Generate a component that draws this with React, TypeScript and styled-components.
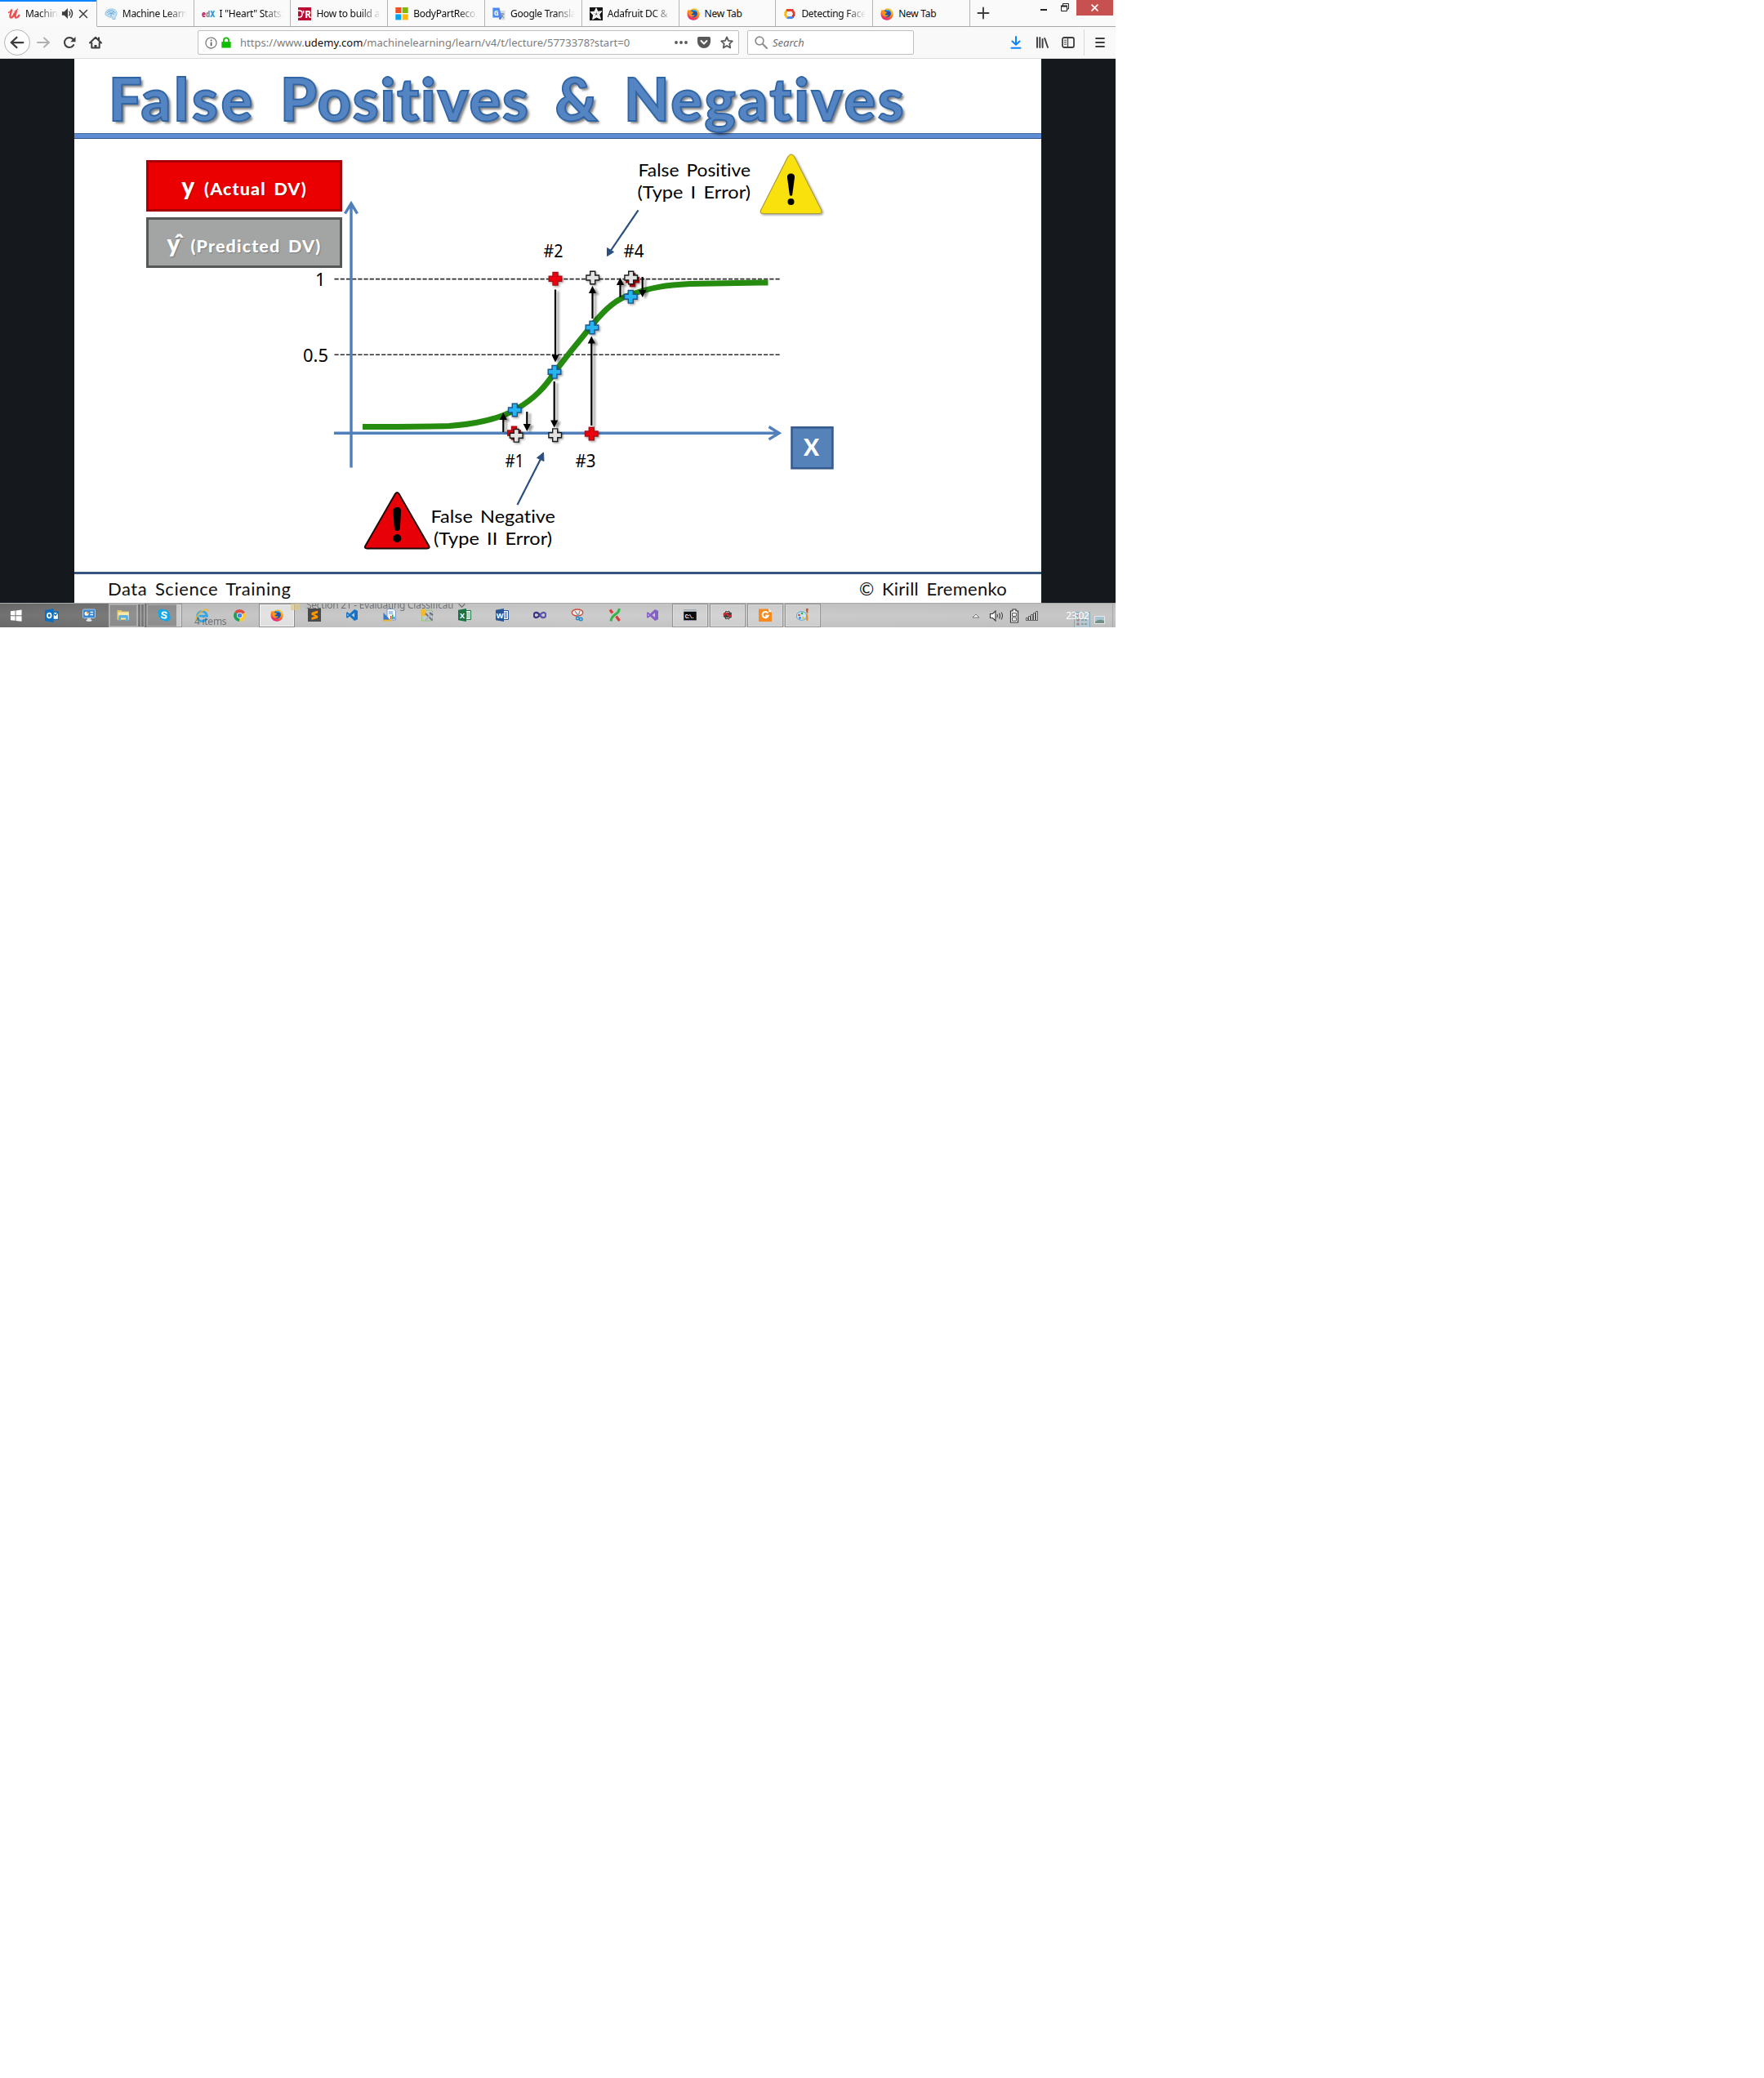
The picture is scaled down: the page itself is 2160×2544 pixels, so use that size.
import React from "react";
import styled, { createGlobalStyle, css } from "styled-components";

const uiFont = `"Noto Sans", "Open Sans", sans-serif`;
const slideFont = `Lato, "Open Sans", sans-serif`;

const Global = createGlobalStyle`
  html, body { margin: 0; padding: 0; background: #fff; }
  * { box-sizing: border-box; }
  svg { display: block; flex: none; }
`;

/* ---------- shell ---------- */
const Desktop = styled.div`
  display: flex;
  flex-direction: column;
  width: 1366px;
  height: 768px;
  overflow: hidden;
  background: #fff;
  font-family: ${uiFont};
`;

/* ---------- tab strip ---------- */
const TabStrip = styled.div`
  display: flex;
  flex: none;
  height: 33px;
  background: #fafafa;
`;
const Tab = styled.div<{ $active?: boolean }>`
  display: flex;
  align-items: center;
  flex: none;
  width: 118.8px;
  height: 33px;
  padding: 1px 8px 0 9px;
  border-right: 1px solid #b5b5b5;
  border-bottom: 1px solid #a8a8a8;
  background: #fafafa;
  ${(p) =>
    p.$active &&
    css`
      padding-right: 10px;
      border-bottom-color: #fafafa;
      box-shadow: inset 0 2px 0 #0a84ff;
    `}
`;
const TabLabel = styled.span<{ $fade?: boolean }>`
  flex: 1;
  min-width: 0;
  margin-left: 6px;
  white-space: nowrap;
  font-size: 12px;
  line-height: 18px;
  letter-spacing: -0.28px;
  color: #0c0c0d;
  ${(p) =>
    p.$fade &&
    css`
      mask-image: linear-gradient(to left, transparent 0, #000 24px);
    `}
`;
const TabAudio = styled.div`
  display: flex;
  align-items: center;
  gap: 6px;
  margin-left: 3px;
`;
const StripEnd = styled.div`
  display: flex;
  flex: 1;
  justify-content: space-between;
  border-bottom: 1px solid #a8a8a8;
`;
const NewTab = styled.div`
  display: flex;
  align-items: center;
  padding-left: 8px;
`;
const WindowButtons = styled.div`
  display: flex;
  align-items: flex-start;
  padding-right: 3px;
`;
const CloseButton = styled.div`
  display: flex;
  align-items: center;
  justify-content: center;
  width: 45px;
  height: 19px;
  margin-left: 5px;
  background: #c75050;
`;

/* ---------- navigation ---------- */
const NavBar = styled.div`
  display: flex;
  align-items: center;
  flex: none;
  height: 39px;
  padding: 0 11px 0 5px;
  border-bottom: 1px solid #dcdcdc;
  background: #f9f9fa;
`;
const BackButton = styled.div`
  display: flex;
  align-items: center;
  justify-content: center;
  width: 32px;
  height: 32px;
  border: 1px solid #b4b4b6;
  border-radius: 50%;
  background: #fdfdfd;
`;
const NavButtons = styled.div`
  display: flex;
  align-items: center;
  gap: 16px;
  width: 197px;
  margin-left: 8px;
`;
const Field = styled.div<{ $w: number }>`
  display: flex;
  align-items: center;
  width: ${(p) => p.$w}px;
  height: 30px;
  border: 1px solid #bfbfc0;
  border-radius: 2px;
  background: #fff;
`;
const UrlField = styled(Field)`
  padding: 0 6px 0 8px;
`;
const SearchField = styled(Field)`
  margin-left: 10px;
  padding-left: 8px;
  gap: 6px;
`;
const UrlText = styled.span`
  flex: 1;
  margin-left: 10px;
  white-space: nowrap;
  font-size: 13px;
  letter-spacing: 0.03px;
  color: #7c7c80;
  b {
    font-weight: 400;
    color: #0c0c0d;
  }
`;
const UrlActions = styled.div`
  display: flex;
  gap: 12px;
`;
const Placeholder = styled.span`
  font-size: 13px;
  font-style: italic;
  color: #6f6f73;
`;
const Tools = styled.div`
  display: flex;
  align-items: center;
  gap: 16px;
  margin-left: auto;
`;
const ToolDivider = styled.i`
  width: 1px;
  height: 32px;
  margin: 0 -5px;
  background: #d8d8da;
`;

/* ---------- video ---------- */
const Video = styled.main`
  display: flex;
  flex: none;
  height: 666px;
  padding: 0 91px;
  background: #15191e;
`;
const Slide = styled.article`
  display: flex;
  flex-direction: column;
  flex: 1;
  background: #fff;
  font-family: ${slideFont};
`;
const Title = styled.h1`
  position: relative;
  z-index: 1;
  display: flex;
  height: 91px;
  margin: 0;
  padding-left: 42px;
  font-size: 72px;
  font-weight: 900;
  line-height: 97px;
  font-variant-ligatures: none;
  color: #5584c3;
  -webkit-text-stroke: 1.8px #2f64a5;
  text-shadow: 3px 3px 3px rgba(0, 0, 0, 0.5);
`;
const Word = styled.span<{ $track: number; $gap: number }>`
  letter-spacing: ${(p) => p.$track}px;
  margin-right: ${(p) => p.$gap}px;
`;
const Rule = styled.div`
  flex: none;
  height: 7px;
  border: solid #2f5590;
  border-width: 1.5px 0;
  border-top-color: #3f679f;
  background: #5f8dd3;
`;
const PlotArea = styled.section`
  display: grid;
  flex: none;
  height: 530px;
  > * {
    grid-area: 1 / 1;
  }
`;
const Legend = styled.div`
  display: flex;
  flex-direction: column;
  gap: 7px;
  padding: 26px 0 0 88px;
`;
const LegendBox = styled.div<{ $fill: string; $line: string }>`
  display: flex;
  align-items: baseline;
  justify-content: center;
  width: 240px;
  height: 62.5px;
  padding-top: 11px;
  border: 3px solid ${(p) => p.$line};
  background: ${(p) => p.$fill};
  color: #fff;
  font-size: 21.5px;
  font-weight: 900;
  line-height: 34px;
  letter-spacing: 1.1px;
  word-spacing: 3.5px;
  text-shadow: 1px 1px 1px rgba(0, 0, 0, 0.25);
`;
const Symbol = styled.span<{ $gap: number }>`
  margin-right: ${(p) => p.$gap}px;
  font-size: 30px;
  letter-spacing: 0;
`;
const HattedY = styled(Symbol)`
  letter-spacing: -7px;
`;
const Footer = styled.footer`
  display: flex;
  justify-content: space-between;
  flex: none;
  height: 38px;
  padding: 0 42px 0 41px;
  border-top: 3px solid #35557f;
  font-size: 22px;
  line-height: 35px;
  letter-spacing: 0.55px;
  word-spacing: 3.5px;
  color: #111;
`;
const Credit = styled.span`
  letter-spacing: 0.25px;
`;

/* ---------- taskbar ---------- */
const Taskbar = styled.div`
  position: relative;
  display: flex;
  flex: none;
  height: 30px;
  overflow: hidden;
  border-top: 1px solid #a9aba9;
  background: linear-gradient(#0000000a, #ffffff0a 50%, #00000008),
    linear-gradient(90deg, #6c6c6c 0, #7b7b7b 216px, #c3c3c3 216px, #cbcbcb 700px, #c5c5c5);
`;
const Task = styled.div<{ $open?: boolean; $front?: boolean; $w?: number }>`
  display: flex;
  align-items: center;
  justify-content: center;
  flex: none;
  width: ${(p) => p.$w ?? 44}px;
  height: 29px;
  padding-bottom: 1px;
  margin-right: 2px;
  border: 1px solid transparent;
  ${(p) =>
    p.$open &&
    css`
      border-color: #929492;
      background: rgba(255, 255, 255, 0.16);
      box-shadow: inset 0 0 0 1px rgba(255, 255, 255, 0.25);
    `}
  ${(p) =>
    p.$front &&
    css`
      border-color: #8b8b8b;
      background: rgba(255, 255, 255, 0.5);
      box-shadow: inset 0 0 0 1px #f4f4f4;
    `}
`;
const StackEdge = styled.div`
  flex: none;
  width: 4px;
  height: 29px;
  border: 1px solid #b4b4b4;
  border-left: 0;
`;
const Stack = styled.div`
  display: flex;
  margin-right: 2px;
  ${Task} {
    margin: 0;
    border-color: #b4b4b4;
  }
`;
const Tray = styled.div`
  position: relative;
  z-index: 1;
  display: flex;
  align-items: center;
  margin-left: auto;
  padding-right: 33px;
`;
const Clock = styled.span`
  margin-left: 33px;
  font-size: 12px;
  letter-spacing: -0.6px;
  color: #fff;
`;
const Ghost = styled.div<{ $x: number; $y: number; $o?: number }>`
  position: absolute;
  left: ${(p) => p.$x}px;
  top: ${(p) => p.$y}px;
  display: flex;
  align-items: center;
  gap: 6px;
  font-size: 12px;
  line-height: 16px;
  letter-spacing: -0.26px;
  white-space: nowrap;
  color: #4c5258;
  opacity: ${(p) => p.$o ?? 0.7};
`;
const ShowDesktop = styled.i`
  position: absolute;
  right: 0;
  top: 0;
  width: 4px;
  height: 29px;
  border-left: 1px solid #a8a8a8;
`;

/* ---------- icons ---------- */
const Ico = ({ s = 16, children }: { s?: number; children: React.ReactNode }) => (
  <svg width={s} height={s} viewBox="0 0 16 16">
    {children}
  </svg>
);
const dark = "#3d3d40";
const line = (d: string, c = dark, w = 2) => (
  <path d={d} fill="none" stroke={c} strokeWidth={w} strokeLinecap="round" strokeLinejoin="round" />
);

const Firefox = () => (
  <Ico>
    <defs>
      <linearGradient id="fx" x1=".8" y1="0" x2=".3" y2="1">
        <stop offset="0" stopColor="#ffd83a" />
        <stop offset=".45" stopColor="#ff8a16" />
        <stop offset="1" stopColor="#e31587" />
      </linearGradient>
    </defs>
    <path d="M8.8 1.2C13 1 15.8 4.300 15.700 8.500 15.600 12.600 12.300 15.700 8.200 15.700 3.700 15.700.400 12.300.500 8 .500 5.800 1.100 3.800 2.200 2.300l.6 1.600C3.700 3 4.700 2.900 5.200 3 6 1.800 7.200 1.300 8.800 1.200z" fill="url(#fx)" />
    <circle cx="8.300" cy="7.600" r="4.600" fill="#1a55b5" />
    <path d="M8.300 2.900c2.500 0 4.200 1.600 4.500 3.600C11.800 4.900 10 4.600 8.700 4.600c-1.500 0-2.300-.4-2.400-1.100.6-.4 1.200-.6 2-.6z" fill="#32b8f0" />
    <path d="M2.300 5.200c1.500-1 3.100-.8 4.200.1l1.600.9-.8 1.200-1.700.6c.2 1.700 2.600 1.900 4.300 1.200-.9 2.200-3.600 2.900-5.700 1.600C2.500 9.600 1.900 7.100 2.300 5.200z" fill="#ff9514" />
  </Ico>
);
const Udemy = () => (
  <Ico>
    <path d="M5 3.500C4.300 7 2.800 10.600 3.700 12c1.300 1.700 4-1.300 5.100-4.500M11 4.500C10 7.400 8.900 11 10.100 12.300c1.300 1 3.200-.6 4.300-2.600" fill="none" stroke="#ea5252" strokeWidth="2.400" strokeLinecap="round" />
    <path d="M1 6.500c2-.5 3.200-1.600 4.200-3.400M8.500 5.200c2.200-.4 3.500-1.800 4.400-3.400" stroke="#ea5252" strokeWidth="1.300" fill="none" />
  </Ico>
);
const Brain = () => (
  <Ico>
    <path d="M1 9C.5 5 4 2 8.500 2c4 0 6.800 2.500 6.500 5.600-.2 2-1.200 3.400-2 4.400v2.500h-3L9.500 12C6 13 4 11 1 9z" fill="#c9e3f5" stroke="#86bde3" strokeWidth=".9" />
    <path d="M3 7c1-2 3-3 5-3s4 1 5 3M4 9c2-2 5-2 8-.5M6 5.500l2 2 3-2M8 8v3" fill="none" stroke="#5ba3d6" strokeWidth=".9" />
  </Ico>
);
const EdX = () => (
  <Ico>
    <text x="0" y="12" fontFamily="Open Sans" fontWeight="800" fontSize="10" textLength="16" lengthAdjust="spacingAndGlyphs">
      <tspan fill="#b52a67">e</tspan>
      <tspan fill="#8a8f96">d</tspan>
      <tspan fill="#1f9fdc">X</tspan>
    </text>
  </Ico>
);
const RBlog = () => (
  <Ico>
    <path d="M0 0h16v16H0z" fill="#bd0c33" />
    <path d="M0 4h2q3 0 3 4t-3 4H0" fill="none" stroke="#fff" strokeWidth="1.600" />
    <text x="5" y="13" fontFamily="Open Sans" fontWeight="700" fontSize="12.500" fill="#fff" textLength="11" lengthAdjust="spacingAndGlyphs">'R</text>
  </Ico>
);
const Microsoft = () => (
  <Ico>
    <path d="M.3 0h7v7h-7z" fill="#f25022" />
    <path d="M8.700 0h7v7h-7z" fill="#7fba00" />
    <path d="M.3 8.400h7v7h-7z" fill="#00a4ef" />
    <path d="M8.700 8.400h7v7h-7z" fill="#ffb900" />
  </Ico>
);
const Translate = () => (
  <Ico>
    <path d="M7 4h8.500v11.500H10z" fill="#d9dcdf" />
    <path d="M9.500 8h5M12 7v1M10.500 12.500l3-4M10.500 9l3.500 4" stroke="#6d7f92" fill="none" />
    <path d="M.3.500h8.200l3 12H.3z" fill="#4b8bf5" />
    <path d="M8 12.500h3.500L8.800 15.600z" fill="#2b55c4" />
    <text x="1.800" y="9.500" fontFamily="Open Sans" fontWeight="700" fontSize="8" fill="#fff">G</text>
  </Ico>
);
const Adafruit = () => (
  <Ico>
    <path d="M0 0h16v16H0z" fill="#141414" />
    <path d="M8 .8l2 4.500 5-.6-3.200 4 1.700 5.500L8.300 12l-4.700 2.700 1-5.300L.9 5.600l5-.3z" fill="#fff" stroke="#fff" strokeLinejoin="round" strokeWidth=".8" />
    <circle cx="8.200" cy="8.300" r="1" fill="#444" />
    <path d="M8.200 4.500v2.600M4.500 7l2.400.8M12 6.500l-2.600 1.200M6.200 11.500l1.300-2.300M10.800 11.500l-1.600-2.200" stroke="#777" strokeWidth=".5" />
  </Ico>
);
const Cloud = () => (
  <Ico>
    <g fill="none" strokeWidth="3">
      <path d="M4.700 3.200L2.200 8" stroke="#f8bb15" />
      <path d="M4 3.500h7.200L13.700 8" stroke="#e94335" />
      <path d="M13.700 8l-2.500 4.600" stroke="#c9392d" />
      <path d="M11.700 12.600H4.500" stroke="#4386f5" />
      <path d="M4.700 12.600L2 8" stroke="#f8bb15" />
    </g>
    <circle cx="7.900" cy="8" r="3" fill="#eef1f6" />
  </Ico>
);

const Speaker = () => (
  <Ico s={15}>
    <path d="M1 5.500h3L8.500 1v14L4 10.500H1z" fill={dark} />
    {line("M10.500 5.500q2 2.500 0 5M12.500 3q4 5 0 10", dark, 1.500)}
  </Ico>
);
const CloseX = () => <Ico s={12}>{line("M2 2l12 12M14 2L2 14", dark, 2)}</Ico>;
const ArrowLeft = () => <Ico s={18}>{line("M14.500 8H1.500M7.500 2.500L1.500 8l6 5.500")}</Ico>;
const ArrowRight = () => <Ico>{line("M1 8h14M9 2.500L15 8l-6 5.500", "#b0b0b2")}</Ico>;
const Reload = () => (
  <Ico>
    {line("M13.200 11A6 6 0 1 1 12.500 4")}
    <path d="M15.500 1v6.300H9.200z" fill={dark} />
  </Ico>
);
const Home = () => (
  <Ico>
    {line("M1 8.500L8 1.700l7 6.800M3.300 8.500v6h9.400v-6")}
    <path d="M6.500 15v-4h3v4z" fill={dark} />
    <path d="M11 1.500h2V5h-2z" fill={dark} />
  </Ico>
);
const Info = () => (
  <Ico s={15}>
    <circle cx="8" cy="8" r="7" fill="none" stroke="#6a6a6d" strokeWidth="1.200" />
    <path d="M7.200 3.800h1.800v1.800H7.200zM7.200 7h1.800v5H7.200z" fill="#5a5a5d" />
  </Ico>
);
const Lock = () => (
  <Ico s={14}>
    <path d="M4.500 8V5a3.500 3.500 0 0 1 7 0v3" fill="none" stroke="#12bc00" strokeWidth="2" />
    <path d="M1.500 7h13v8.500h-13z" fill="#12bc00" />
  </Ico>
);
const Dots = () => (
  <Ico>
    {[2, 8, 14].map((x) => (
      <circle key={x} cx={x} cy="8" r="1.900" fill="#58585b" />
    ))}
  </Ico>
);
const Pocket = () => (
  <Ico>
    <path d="M1.800 1h12.400Q16 1 16 2.800V7a8 8 0 0 1-16 0V2.800Q0 1 1.800 1z" fill="#58585b" />
    {line("M4.500 6L8 9.500 11.500 6", "#fff")}
  </Ico>
);
const Star = () => <Ico>{line("M8 1.500l2 4.300 4.800.6-3.500 3.200.9 4.900L8 12l-4.200 2.500.9-4.900L1.200 6.400 6 5.800z", "#58585b", 1.800)}</Ico>;
const Magnifier = () => (
  <Ico>
    <circle cx="6" cy="6" r="4.900" fill="none" stroke="#8d8d90" strokeWidth="1.700" />
    {line("M9.800 9.800L15 15", "#8d8d90", 2)}
  </Ico>
);
const Download = () => <Ico>{line("M8 1v9.500M3.500 6.500L8 10.800l4.500-4.300M2.500 14.700h11", "#0a84ff")}</Ico>;
const Library = () => <Ico>{line("M2 2v12M5.300 2v12M8.600 4v10M11.200 3l3.800 11", dark, 1.900)}</Ico>;
const Sidebar = () => (
  <Ico>
    <rect x="1" y="2" width="14" height="12" rx="2" fill="none" stroke={dark} strokeWidth="1.800" />
    <path d="M7.500 2v12" stroke={dark} strokeWidth="1.300" />
    <path d="M3 5.200h3M3 7.700h3M3 10.200h3" stroke={dark} strokeWidth="1" />
  </Ico>
);
const Burger = () => <Ico>{line("M3 3h10M3 8h10M3 13h10", dark, 1.800)}</Ico>;

const Windows = () => (
  <Ico s={15}>
    <path d="M1 2.500l6-.8v6H1zM8 1.600l7.500-1v7.100H8zM1 8.700h6v6L1 14zM8 8.700h7.500v7L8 14.800z" fill="#fff" />
  </Ico>
);
const OfficeTile = ({ c, t, sheet }: { c: string; t: string; sheet?: boolean }) => (
  <Ico>
    <path d="M8 2.500h7.500v11H8z" fill="#fff" stroke={c} />
    {sheet ? (
      <path d="M10 5h1.500M12.500 5H14M10 7h1.500M12.500 7H14M10 9h1.500M12.500 9H14M10 11h1.500M12.500 11H14" stroke={c} strokeWidth="1.200" />
    ) : (
      <path d="M10.500 5H14M10.500 7H14M10.500 9H14M10.500 11H14" stroke={c} />
    )}
    <path d="M0 1.800L10 0v16L0 14.200z" fill={c} />
    <text x="5" y="11.500" textAnchor="middle" fontFamily="Open Sans" fontWeight="700" fontSize="9" fill="#fff">{t}</text>
  </Ico>
);
const Outlook = () => (
  <Ico s={17}>
    <path d="M9 4h6.500v8.500H9z" fill="#fff" stroke="#0b6fc4" strokeWidth="1.200" />
    {line("M10 5.500l2 2.500 3-3.500", "#0b6fc4", 1.200)}
    <path d="M0 2l10-2v16L0 14z" fill="#0b6fc4" />
    <ellipse cx="5" cy="8" rx="2.200" ry="2.700" fill="none" stroke="#fff" strokeWidth="1.600" />
  </Ico>
);
const ControlPanel = () => (
  <Ico>
    <rect x=".5" y="1" width="15" height="10.500" rx="1" fill="#3a86cf" stroke="#a9cbea" />
    <circle cx="5" cy="6.200" r="2.500" fill="#fff" />
    <path d="M5 6.200V3.700a2.500 2.500 0 0 1 2.500 2.500z" fill="#f39423" />
    <path d="M9.500 4.500H13M9.500 7.500H13" stroke="#fff" strokeWidth="1.300" />
    <path d="M6 12h4v2H6z" fill="#cfd6dc" />
    <ellipse cx="8" cy="14.500" rx="3.500" ry="1.300" fill="#e4e9ee" />
  </Ico>
);
const Explorer = () => (
  <Ico>
    <path d="M.5 2h5l1 1.500H15V14H.5z" fill="#e5c667" />
    <path d="M1.500 4.500h13V13h-13z" fill="#f7e7a8" />
    <path d="M2 15V10q0-2 2-2h8q2 0 2 2v5h-3v-3.500H5V15z" fill="#5fb1e0" />
  </Ico>
);
const Skype = () => (
  <Ico>
    <path d="M4.500.5a4 4 0 0 1 2.700.8A7 7 0 0 1 15 9.200a4.200 4.200 0 0 1-6.200 5.500A7 7 0 0 1 1.200 7 4.200 4.200 0 0 1 4.500.500z" fill="#10a8e8" />
    <path d="M11 5.700C10.500 4 5.700 3.600 5.500 6c-.1 2.300 5.300 1.500 5.200 4 0 2.300-5 2.200-5.700.2" fill="none" stroke="#fff" strokeWidth="1.800" strokeLinecap="round" />
  </Ico>
);
const IE = () => (
  <Ico s={17}>
    <path d="M13.200 11.200A5.600 5.600 0 1 1 13.600 8.600H4.500" fill="none" stroke="#36a5e4" strokeWidth="2.600" />
    <path d="M1.500 14.500C-.8 12.500 3 6 8 3c4-2.400 7.500-2.800 6.600.5" fill="none" stroke="#edb92e" strokeWidth="1.300" />
  </Ico>
);
const Chrome = () => (
  <Ico s={15}>
    <path d="M8 8L1.500 3.500A8 8 0 0 1 15 4.200z" fill="#dd4b3e" />
    <path d="M8 8l7-3.800A8 8 0 0 1 7.500 16z" fill="#fcc934" />
    <path d="M8 8l-.5 8A8 8 0 0 1 1.500 3.500z" fill="#1fa05a" />
    <circle cx="8" cy="8" r="3.700" fill="#fff" />
    <circle cx="8" cy="8" r="2.900" fill="#4585f0" />
  </Ico>
);
const Sublime = () => (
  <Ico>
    <path d="M0 0h16v16H0z" fill="#4a4a4a" />
    <path d="M12 2.500v3L8 7l4 1.700v3L4.500 14v-3l4-1.500-4-1.700V5z" fill="#ff9800" />
  </Ico>
);
const Code = ({ c }: { c: string }) => (
  <Ico>
    <path d="M11 1l4 1.700v10.600L11 15 5 9.500 2.300 11.700 1 11V5l1.300-.7L5 6.500zM11 5.300L7.500 8 11 10.700zM2.300 6.500v3L4 8z" fill={c} fillRule="evenodd" />
  </Ico>
);
const ChartDoc = () => (
  <Ico>
    <path d="M5 .5h8l2.500 2.500v11H5z" fill="#f5f9ff" stroke="#5f86bb" strokeWidth=".8" />
    <path d="M7 4h5M7 6h5" stroke="#5b95d8" />
    <path d="M9 9h1.500v4H9z" fill="#d94a3d" />
    <path d="M11 7.500h1.500V13H11z" fill="#35a853" />
    <path d="M13 10h1.300v3H13z" fill="#2b77d0" />
    <path d="M.5 5v9l8.500.2z" fill="#3777cf" />
    <path d="M0 13.500h11v2H0z" fill="#e8b52e" />
  </Ico>
);
const DbTools = () => (
  <Ico>
    <path d="M1.500 2h13v13h-13z" fill="none" stroke="#69c443" strokeDasharray="1.500 1.300" />
    <path d="M.5 1.500q3-2 6 0v7q-3 1.500-6 0z" fill="#f2ba2c" />
    <path d="M6 6l8.500 8.500" stroke="#707a84" strokeWidth="2" />
    <path d="M13.500 6L6 14.500" stroke="#aab4bf" strokeWidth="2.200" />
    <path d="M11 5l4 3" stroke="#5f6c78" strokeWidth="2" />
  </Ico>
);
const Infinity = () => (
  <Ico>
    <path d="M8 8C6.500 5.700 5 4.900 3.700 4.900a3 3 0 0 0 0 6.200C5 11.100 6.500 10 8 8" fill="none" stroke="#3d2e86" strokeWidth="2.300" />
    <path d="M8 8c1.500-2 3-3.100 4.300-3.100a3 3 0 0 1 0 6.200C11 11.100 9.500 10.300 8 8" fill="none" stroke="#5a55a8" strokeWidth="2.300" />
  </Ico>
);
const Snip = () => (
  <Ico>
    <ellipse cx="8" cy="5" rx="6.800" ry="4" fill="#fbeae6" stroke="#cc4a35" strokeWidth="1.300" />
    <path d="M5 3l5 7M11 2.500L9 10" stroke="#8f9aa3" strokeWidth="1.300" />
    <circle cx="8.300" cy="12" r="1.800" fill="none" stroke="#2787c8" strokeWidth="1.400" />
    <circle cx="12.300" cy="13" r="1.800" fill="none" stroke="#2787c8" strokeWidth="1.400" />
  </Ico>
);
const Ribbon = () => (
  <Ico>
    <path d="M2 1.500l3 4M9.500 9.500l4 5.500" stroke="#dd3b36" strokeWidth="3.200" />
    <path d="M13 0c.5 4-2 5.500-5 7.500S3.500 11.500 3 15.500" fill="none" stroke="#35b44a" strokeWidth="3" />
  </Ico>
);
const Terminal = () => (
  <Ico>
    <path d="M0 1.500h16v13H0z" fill="#0a0a0a" stroke="#8e959c" strokeWidth=".8" />
    <path d="M0 1.500h16v2.300H0z" fill="#bfc6cd" />
    <text x="1.800" y="11.500" fontFamily="Liberation Mono" fontWeight="700" fontSize="6.500" fill="#fff" textLength="11.500">C:\.</text>
  </Ico>
);
const Ball = () => (
  <Ico>
    <circle cx="8" cy="8" r="5.500" fill="#444" stroke="#eee" strokeWidth="1.200" strokeDasharray="2 2" />
    <path d="M3 8.500q2.500-5 5-1t5 0" fill="none" stroke="#e3262b" strokeWidth="2" />
    <path d="M6 4.500h4M6 11.500h4" stroke="#b5b5b5" strokeWidth="1.200" />
  </Ico>
);
const Gforge = () => (
  <Ico>
    <path d="M0 .5h11.500L16 4.500V16H0z" fill="#f78a1e" />
    <path d="M12 0v4.200h4z" fill="#fff" />
    <path d="M11.300 5.700A3.600 3.600 0 1 0 11.600 8.800H8" fill="none" stroke="#fff" strokeWidth="2" />
  </Ico>
);
const Paint = () => (
  <Ico>
    <ellipse cx="6.500" cy="9" rx="6.300" ry="5.300" fill="#c5e4f3" stroke="#4c9fc9" strokeWidth=".9" />
    <circle cx="3.500" cy="8" r="1.300" fill="#e23b30" />
    <circle cx="7" cy="6" r="1.300" fill="#3aa845" />
    <circle cx="4.500" cy="11.500" r="1.300" fill="#2d6dd0" />
    <circle cx="8.500" cy="11.500" r="1.300" fill="#f2b828" />
    <path d="M13.300 15.500q-2.500-2 0-10q2.500 8 0 10z" fill="#e58a2a" />
    <path d="M11.800 0h3l-.8 5.500h-1.400z" fill="#c2542b" />
  </Ico>
);

/* ---------- chart ---------- */
const Plus = ({ x, y, kind }: { x: number; y: number; kind: "red" | "white" | "blue" }) => {
  const [fill, stroke] = { red: ["#ee0008", "#a51018"], white: ["#e2e2e2", "#1c1c1c"], blue: ["#27b5f0", "#1c568c"] }[kind];
  return (
    <path
      transform={`translate(${x} ${y})`}
      d="M-3-7.800H3V-3H7.800V3H3V7.800H-3V3H-7.800V-3H-3z"
      fill={fill}
      stroke={stroke}
      strokeWidth="1.400"
      filter="url(#soft)"
    />
  );
};
const Arrow = ({ x, from, to }: { x: number; from: number; to: number }) => {
  const s = to > from ? -1 : 1;
  return (
    <g filter="url(#drop)">
      <path d={`M${x} ${from}V${to + s * 7}`} stroke="#000" strokeWidth="2.200" />
      <path d={`M${x} ${to}l-4.600 ${s * 9}h9.200z`} />
    </g>
  );
};
const Callout = styled.text`
  font-variant-ligatures: none;
  word-spacing: 3px;
`;

const Chart = () => (
  <svg width="1184" height="530" viewBox="91 170 1184 530" fontFamily="Lato, Open Sans" fontSize="22" fill="#000">
    <defs>
      <filter id="drop" filterUnits="userSpaceOnUse" x="500" y="300" width="400" height="260">
        <feDropShadow dx="3.500" dy="2" stdDeviation="1.200" floodOpacity=".4" />
      </filter>
      <filter id="soft" x="-50%" y="-50%" width="200%" height="200%">
        <feDropShadow dx="1.500" dy="1.500" stdDeviation="1" floodOpacity=".35" />
      </filter>
    </defs>
    <g stroke="#2e2e2e" strokeWidth="1.600" strokeDasharray="5.200 2">
      <path d="M409.500 341.600H956" />
      <path d="M409.500 434.300H956" />
    </g>
    <g stroke="#4f80bb" strokeWidth="3.400" fill="none">
      <path d="M430 572.500V250M422.500 261.500L430 249l7.500 12.500" />
      <path d="M409 530.200H953M941.500 522.500L954 530.200l-12.500 7.700" />
    </g>
    <path
      d="M444 522.500C490 522.300 530 522.200 550 521.500C585 519 610 513 630.300 502C655 488 668 473 679 456C695 434 708 419 725 398C742 377 755 366 773 360.500C797 352 815 349 845 347.600C880 346.800 910 346.300 940.500 346"
      fill="none"
      stroke="#258c10"
      strokeWidth="7"
    />
    <Arrow x={680} from={354.500} to={443.500} />
    <Arrow x={678.700} from={467} to={523.500} />
    <Arrow x={724.300} from={521} to={411.500} />
    <Arrow x={725.500} from={390} to={350} />
    <Arrow x={759.500} from={364} to={340} />
    <Arrow x={786.700} from={339} to={364} />
    <Arrow x={616.300} from={529} to={505} />
    <Arrow x={645.300} from={504} to={528} />
    <Plus x={680} y={341.300} kind="red" />
    <Plus x={724.300} y={531} kind="red" />
    <Plus x={629.500} y={530} kind="red" />
    <Plus x={774.500} y={342.700} kind="red" />
    <Plus x={725.700} y={340} kind="white" />
    <Plus x={772.700} y={340} kind="white" />
    <Plus x={632.300} y={533.300} kind="white" />
    <Plus x={679.700} y={532.700} kind="white" />
    <Plus x={630.300} y={502} kind="blue" />
    <Plus x={679} y={455.300} kind="blue" />
    <Plus x={725} y={401} kind="blue" />
    <Plus x={772.300} y={363.300} kind="blue" />

    <g fontFamily="Noto Sans, Open Sans" fontSize="22">
      <text x="386" y="350">1</text>
      <text x="371" y="443" textLength="31" lengthAdjust="spacingAndGlyphs">0.5</text>
      <text x="665.500" y="314.700" textLength="24" lengthAdjust="spacingAndGlyphs">#2</text>
      <text x="763.500" y="314.700" textLength="25" lengthAdjust="spacingAndGlyphs">#4</text>
      <text x="618.500" y="571.500" textLength="23" lengthAdjust="spacingAndGlyphs">#1</text>
      <text x="704.500" y="571.500" textLength="25" lengthAdjust="spacingAndGlyphs">#3</text>
    </g>
    <g>
      <Callout x="781.500" y="215.700" textLength="137.500" lengthAdjust="spacingAndGlyphs">False Positive</Callout>
      <Callout x="780.500" y="242.700" textLength="138.500" lengthAdjust="spacingAndGlyphs">(Type I Error)</Callout>
      <Callout x="527.500" y="640.200" textLength="152.500" lengthAdjust="spacingAndGlyphs">False Negative</Callout>
      <Callout x="531" y="667" textLength="145" lengthAdjust="spacingAndGlyphs">(Type II Error)</Callout>
    </g>

    <g stroke="#2a4f80" strokeWidth="2.200" fill="#2a4f80">
      <path d="M781.500 257.300L747 308" />
      <path d="M743.500 313.500v-10l8 5z" strokeWidth="1" />
      <path d="M633.500 618L663 560" />
      <path d="M665.500 554l.5 10.500-8.500-4z" strokeWidth="1" />
    </g>

    <path d="M964.500 192.500Q968.700 185.500 973 192.500L1005.500 256.500Q1007.500 261.500 1002.500 261.500H935Q929.500 261.500 932 256.500z" fill="#f8e10e" stroke="#a99c3f" strokeWidth="1.200" filter="url(#soft)" />
    <path d="M968.500 212.500c3 0 4.800 1.800 4.500 5L970 239.500h-3l-3-22c-.3-3.200 1.500-5 4.500-5z" />
    <circle cx="968.500" cy="247" r="4" />
    <path d="M484 604.500Q486.300 601.500 488.500 604.500L525 668Q527 671.500 523 671.500H449.500Q445.500 671.500 447.500 668z" fill="#e80008" stroke="#1c0b0b" strokeWidth="2" />
    <path d="M486.300 621c3.500 0 5 2 4.800 5l-1.200 19.500c-.2 3.200-1.400 4.500-3.600 4.500s-3.400-1.300-3.600-4.500L481.500 626c-.2-3 1.300-5 4.800-5z" />
    <circle cx="486.300" cy="659" r="5" />

    <rect x="969.500" y="523.300" width="50" height="50" fill="#5682ba" stroke="#35598c" strokeWidth="2.500" />
    <text x="993.500" y="558" textAnchor="middle" fontWeight="900" fontSize="28" fill="#fff">X</text>
  </svg>
);

const tabs: { icon: React.ReactNode; label: string; fade?: boolean; active?: boolean }[] = [
  { icon: <Udemy />, label: "Machine", fade: true, active: true },
  { icon: <Brain />, label: "Machine Learn", fade: true },
  { icon: <EdX />, label: 'I "Heart" Stats:', fade: true },
  { icon: <RBlog />, label: "How to build a", fade: true },
  { icon: <Microsoft />, label: "BodyPartReco", fade: true },
  { icon: <Translate />, label: "Google Transla", fade: true },
  { icon: <Adafruit />, label: "Adafruit DC &", fade: true },
  { icon: <Firefox />, label: "New Tab" },
  { icon: <Cloud />, label: "Detecting Face", fade: true },
  { icon: <Firefox />, label: "New Tab" },
];

const pinned = [
  <IE />, <Chrome />, <Firefox />, <Sublime />, <Code c="#1873c5" />, <ChartDoc />, <DbTools />,
  <OfficeTile c="#1f7244" t="X" sheet />, <OfficeTile c="#2a5699" t="W" />, <Infinity />, <Snip />,
  <Ribbon />, <Code c="#8661c5" />, <Terminal />, <Ball />, <Gforge />, <Paint />,
];

export default function App() {
  return (
    <>
      <Global />
      <Desktop>
        <TabStrip>
          {tabs.map((t, i) => (
            <Tab key={i} $active={t.active}>
              {t.icon}
              <TabLabel $fade={t.fade}>{t.label}</TabLabel>
              {t.active && (
                <TabAudio>
                  <Speaker />
                  <CloseX />
                </TabAudio>
              )}
            </Tab>
          ))}
          <StripEnd>
            <NewTab>
              <Ico>{line("M8 1.500v13M1.500 8h13", dark, 1.900)}</Ico>
            </NewTab>
            <WindowButtons>
              <svg width="40" height="24" viewBox="0 0 40 24">
                <path d="M1 12h8" stroke="#222" strokeWidth="2" />
                <path d="M26.500 7.500h7v6h-7zM28.500 7V4.500h7v6.500H34" fill="none" stroke="#222" />
                <path d="M26 7.500h8" stroke="#222" strokeWidth="2" />
              </svg>
              <CloseButton>
                <Ico s={9}>{line("M2 2l12 12M14 2L2 14", "#fff", 3)}</Ico>
              </CloseButton>
            </WindowButtons>
          </StripEnd>
        </TabStrip>

        <NavBar>
          <BackButton>
            <ArrowLeft />
          </BackButton>
          <NavButtons>
            <ArrowRight />
            <Reload />
            <Home />
          </NavButtons>
          <UrlField $w={663}>
            <Info />
            <svg width="4" height="1" />
            <Lock />
            <UrlText>
              https://www.<b>udemy.com</b>/machinelearning/learn/v4/t/lecture/5773378?start=0
            </UrlText>
            <UrlActions>
              <Dots />
              <Pocket />
              <Star />
            </UrlActions>
          </UrlField>
          <SearchField $w={204}>
            <Magnifier />
            <Placeholder>Search</Placeholder>
          </SearchField>
          <Tools>
            <Download />
            <Library />
            <Sidebar />
            <ToolDivider />
            <Burger />
          </Tools>
        </NavBar>

        <Video>
          <Slide>
            <Title>
              <Word $track={3.6} $gap={30.5}>False</Word>
              <Word $track={1.8} $gap={31}>Positives</Word>
              <Word $track={0} $gap={32}>&amp;</Word>
              <Word $track={2.65} $gap={0}>Negatives</Word>
            </Title>
            <Rule />
            <PlotArea>
              <Chart />
              <Legend>
                <LegendBox $fill="#ea0000" $line="#a80008">
                  <Symbol $gap={12}>y</Symbol>(Actual DV)
                </LegendBox>
                <LegendBox $fill="#a3a5a4" $line="#565858">
                  <HattedY $gap={15}>yˆ</HattedY>
                  (Predicted DV)
                </LegendBox>
              </Legend>
            </PlotArea>
            <Footer>
              <span>Data Science Training</span>
              <Credit>© Kirill Eremenko</Credit>
            </Footer>
          </Slide>
        </Video>

        <Taskbar>
          <Task $w={39}><Windows /></Task>
          <Task><Outlook /></Task>
          <Task><ControlPanel /></Task>
          <Stack>
            <Task $w={36} $open><Explorer /></Task>
            <StackEdge />
            <StackEdge />
          </Stack>
          <Task $open><Skype /></Task>
          {pinned.map((icon, i) => (
            <Task key={i} $open={i > 12} $front={i === 2}>{icon}</Task>
          ))}
          <Tray>
            <svg width="10" height="6" viewBox="0 0 10 6">
              <path d="M1 5L5 1l4 4z" fill="#fff" stroke="#666" strokeWidth=".9" />
            </svg>
            <svg width="36" height="18" viewBox="-14 -1 36 18">
              <path d="M-1.500 5.500h3L5 2v12l-3.500-3.500h-3z" fill="#fff" stroke="#333" strokeWidth="1.100" />
              <path d="M7 6q1 2 0 4M9.500 4.500q2 3.500 0 7M12 3.500q3 4.500 0 9" fill="none" stroke="#444" strokeWidth="1.100" />
            </svg>
            <svg width="12" height="18" viewBox="0 0 12 18">
              <path d="M1.500 3H4V1h4v2h2.500v14h-9z" fill="#fff" stroke="#333" strokeWidth="1.200" />
              <path d="M3.500 5.500h5v4h-5zM3.500 11h5v4h-5z" fill="#eee" stroke="#444" strokeWidth=".9" />
            </svg>
            <svg width="24" height="16" viewBox="-8 0 24 16">
              {[0, 3, 6, 9, 12].map((x, i) => (
                <path key={x} d={`M${x + 0.5} 13.500v-${3 + i * 2}h2v${3 + i * 2}z`} fill="#fff" stroke="#444" strokeWidth=".9" />
              ))}
            </svg>
            <Clock>23:02</Clock>
          </Tray>
          <Ghost $x={355} $y={-6}>
            <svg width="14" height="16" viewBox="0 0 14 16">
              <path d="M1 2h11v12H1z" fill="#d9c98a" />
            </svg>
            Section 21 - Evaluating Classificati
            <Ico s={9}>{line("M2 5l6 6 6-6", "#555", 2.500)}</Ico>
          </Ghost>
          <Ghost $x={238} $y={14}>4 items</Ghost>
          <Ghost $x={1315} $y={10} $o={0.75}>
            <svg width="40" height="20" viewBox="0 0 40 20">
              <path d="M.5.500h19v19H.500z" fill="#a9cfe0" fillOpacity=".6" stroke="#6aa5c0" />
              <path d="M4 3h2v2H4zM4 9h2v2H4zM4 14h2v2H4z" fill="none" stroke="#a0524b" />
              <path d="M9 10h3M13 10h3M9 15h3M13 15h3" stroke="#44606e" strokeWidth="1.200" />
              <path d="M25.500 5.500h12v9h-12z" fill="#9cc4da" stroke="#f5f5f5" />
              <path d="M26 12q5-4 11-1v3H26z" fill="#55806d" />
            </svg>
          </Ghost>
          <ShowDesktop />
        </Taskbar>
      </Desktop>
    </>
  );
}
